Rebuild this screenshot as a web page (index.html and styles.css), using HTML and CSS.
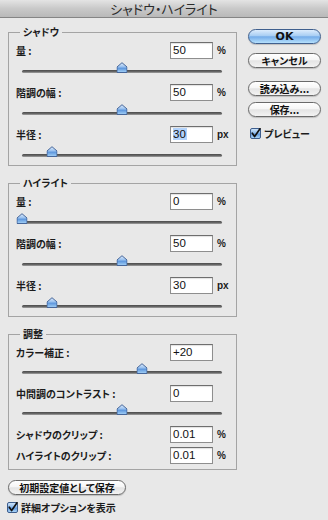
FILE: index.html
```html
<!DOCTYPE html>
<html lang="ja">
<head>
<meta charset="utf-8">
<title>シャドウ・ハイライト</title>
<link rel="stylesheet" href="styles.css">
</head>
<body>
<svg class="defs" width="0" height="0" aria-hidden="true">
  <defs>
    <linearGradient id="thumbg" x1="0" y1="0" x2="0" y2="1">
      <stop offset="0" stop-color="#e2eefc"/>
      <stop offset="0.45" stop-color="#93bdee"/>
      <stop offset="0.55" stop-color="#5c95dc"/>
      <stop offset="1" stop-color="#a6d3f8"/>
    </linearGradient>
    <linearGradient id="checkg" x1="0" y1="0" x2="0" y2="1">
      <stop offset="0" stop-color="#d4e8fb"/>
      <stop offset="0.45" stop-color="#8fbbec"/>
      <stop offset="0.55" stop-color="#5f98de"/>
      <stop offset="1" stop-color="#b2dcfb"/>
    </linearGradient>
  </defs>
</svg>
<div class="window">
  <div class="titlebar">シャドウ・ハイライト</div>
  <div class="content">
    <div class="left">
      <fieldset class="group">
        <legend>シャドウ</legend>
        <div class="row"><span class="label">量 :</span><span class="field">50</span><span class="unit">%</span></div>
        <div class="slider"><div class="track"><svg class="thumb" style="left:50%" width="11" height="11" viewBox="0 0 11 11"><path d="M0.5 10.5 V5 L5.5 0.7 L10.5 5 V10.5 Z" fill="url(#thumbg)" stroke="#46669a" stroke-linejoin="round"/></svg></div></div>
        <div class="row"><span class="label">階調の幅 :</span><span class="field">50</span><span class="unit">%</span></div>
        <div class="slider"><div class="track"><svg class="thumb" style="left:50%" width="11" height="11" viewBox="0 0 11 11"><path d="M0.5 10.5 V5 L5.5 0.7 L10.5 5 V10.5 Z" fill="url(#thumbg)" stroke="#46669a" stroke-linejoin="round"/></svg></div></div>
        <div class="row"><span class="label">半径 :</span><span class="field"><span class="sel">30</span></span><span class="unit">px</span></div>
        <div class="slider last"><div class="track"><svg class="thumb" style="left:15%" width="11" height="11" viewBox="0 0 11 11"><path d="M0.5 10.5 V5 L5.5 0.7 L10.5 5 V10.5 Z" fill="url(#thumbg)" stroke="#46669a" stroke-linejoin="round"/></svg></div></div>
      </fieldset>

      <fieldset class="group">
        <legend>ハイライト</legend>
        <div class="row"><span class="label">量 :</span><span class="field">0</span><span class="unit">%</span></div>
        <div class="slider"><div class="track"><svg class="thumb" style="left:0%" width="11" height="11" viewBox="0 0 11 11"><path d="M0.5 10.5 V5 L5.5 0.7 L10.5 5 V10.5 Z" fill="url(#thumbg)" stroke="#46669a" stroke-linejoin="round"/></svg></div></div>
        <div class="row"><span class="label">階調の幅 :</span><span class="field">50</span><span class="unit">%</span></div>
        <div class="slider"><div class="track"><svg class="thumb" style="left:50%" width="11" height="11" viewBox="0 0 11 11"><path d="M0.5 10.5 V5 L5.5 0.7 L10.5 5 V10.5 Z" fill="url(#thumbg)" stroke="#46669a" stroke-linejoin="round"/></svg></div></div>
        <div class="row"><span class="label">半径 :</span><span class="field">30</span><span class="unit">px</span></div>
        <div class="slider last"><div class="track"><svg class="thumb" style="left:15%" width="11" height="11" viewBox="0 0 11 11"><path d="M0.5 10.5 V5 L5.5 0.7 L10.5 5 V10.5 Z" fill="url(#thumbg)" stroke="#46669a" stroke-linejoin="round"/></svg></div></div>
      </fieldset>

      <fieldset class="group adjust">
        <legend>調整</legend>
        <div class="row"><span class="label">カラー補正 :</span><span class="field">+20</span><span class="unit"></span></div>
        <div class="slider"><div class="track"><svg class="thumb" style="left:60%" width="11" height="11" viewBox="0 0 11 11"><path d="M0.5 10.5 V5 L5.5 0.7 L10.5 5 V10.5 Z" fill="url(#thumbg)" stroke="#46669a" stroke-linejoin="round"/></svg></div></div>
        <div class="row"><span class="label">中間調のコントラスト :</span><span class="field">0</span><span class="unit"></span></div>
        <div class="slider"><div class="track"><svg class="thumb" style="left:50%" width="11" height="11" viewBox="0 0 11 11"><path d="M0.5 10.5 V5 L5.5 0.7 L10.5 5 V10.5 Z" fill="url(#thumbg)" stroke="#46669a" stroke-linejoin="round"/></svg></div></div>
        <div class="row"><span class="label">シャドウのクリップ :</span><span class="field">0.01</span><span class="unit">%</span></div>
        <div class="row clip"><span class="label">ハイライトのクリップ :</span><span class="field">0.01</span><span class="unit">%</span></div>
      </fieldset>

      <div class="btn wide">初期設定値として保存</div>
      <label class="checkrow bottom">
        <svg class="check" width="11" height="11" viewBox="0 0 11 11"><rect x="0.5" y="0.5" width="10" height="10" rx="1.5" fill="url(#checkg)" stroke="#3d5d8c"/><path d="M2.3 5.2 L4.6 8.6 L10 0.8" fill="none" stroke="#111" stroke-width="1.7" stroke-linecap="round" stroke-linejoin="round"/></svg>
        <span>詳細オプションを表示</span>
      </label>
    </div>

    <div class="right">
      <div class="btn default ok">OK</div>
      <div class="btn cancel">キャンセル</div>
      <div class="btn load">読み込み...</div>
      <div class="btn save">保存...</div>
      <label class="checkrow preview">
        <svg class="check" width="11" height="11" viewBox="0 0 11 11"><rect x="0.5" y="0.5" width="10" height="10" rx="1.5" fill="url(#checkg)" stroke="#3d5d8c"/><path d="M2.3 5.2 L4.6 8.6 L10 0.8" fill="none" stroke="#111" stroke-width="1.7" stroke-linecap="round" stroke-linejoin="round"/></svg>
        <span>プレビュー</span>
      </label>
    </div>
  </div>
</div>
</body>
</html>
```

FILE: styles.css
```css
* { box-sizing: border-box; }

html, body {
  margin: 0;
  padding: 0;
  background: #e8e8e8;
}

body {
  width: 328px;
  height: 520px;
  overflow: hidden;
  font-family: "Noto Sans CJK JP", "DejaVu Sans", sans-serif;
  font-feature-settings: "palt";
  color: #1c1c1c;
}

.defs {
  display: block;
  width: 0;
  height: 0;
  overflow: hidden;
}

.window {
  width: 328px;
  height: 520px;
  background: #e8e8e8;
}

.titlebar {
  height: 18px;
  line-height: 17px;
  text-align: center;
  font-size: 13px;
  color: #2b2b2b;
  background: linear-gradient(#e4e4e4, #c9c9c9 50%, #b9b9b9);
  border-bottom: 1px solid #858585;
}

.content {
  display: flex;
  align-items: flex-start;
  padding: 0 0 0 8px;
}

.left {
  width: 229px;
  display: flex;
  flex-direction: column;
  padding-top: 7px;
}

.right {
  width: 73px;
  margin-left: 11px;
  display: flex;
  flex-direction: column;
  padding-top: 11px;
}

/* group boxes */
.group {
  margin: 0 0 10px 0;
  padding: 3px 6px 0 7px;
  border: 1px solid #a4a4a4;
  min-width: 0;
}

.group legend {
  margin-left: 4px;
  padding: 0 3px;
  font-size: 10px;
  line-height: 14px;
  font-weight: bold;
  color: #1c1c1c;
}

.row {
  display: flex;
  align-items: center;
  height: 17px;
}

.label {
  flex: 1;
  font-size: 10px;
  font-weight: bold;
  line-height: 17px;
  white-space: nowrap;
}

.field {
  width: 43px;
  height: 17px;
  background: #fff;
  border: 1px solid #8e8e8e;
  border-top-color: #6e6e6e;
  box-shadow: inset 0 1px 1px rgba(0, 0, 0, 0.12);
  padding-left: 2px;
  font-family: "Liberation Sans", "DejaVu Sans", sans-serif;
  font-size: 11.5px;
  line-height: 15px;
  color: #111;
}

.sel {
  background: #b3d3fb;
  padding: 0 1px 0 0;
}

.unit {
  width: 13px;
  margin-left: 4px;
  font-family: "Liberation Sans", "DejaVu Sans", sans-serif;
  font-size: 10px;
  font-weight: bold;
  color: #1c1c1c;
  line-height: 17px;
}

/* sliders */
.slider {
  height: 25px;
  padding: 11px 8px 0 6px;
}

.slider.last {
  height: 22px;
}

.adjust .slider {
  height: 24px;
  padding-top: 10px;
}

.adjust {
  padding-bottom: 5px;
}

.row.clip {
  margin-top: 4px;
}

.track {
  position: relative;
  height: 3px;
  border-radius: 2px;
  background: linear-gradient(#4a4a4a, #6a6a6a 60%, #a8a8a8);
}

.thumb {
  position: absolute;
  top: -8px;
  display: block;
  transform: translateX(-50%);
}

/* buttons */
.btn {
  height: 15px;
  border: 1px solid #6a6a6a;
  border-radius: 8px;
  background: linear-gradient(#ffffff 0%, #f6f6f6 45%, #e4e4e4 52%, #f3f3f3 100%);
  box-shadow: 0 1px 1px rgba(0, 0, 0, 0.18);
  display: flex;
  align-items: center;
  justify-content: center;
  font-size: 10px;
  font-weight: bold;
  line-height: 13px;
  color: #111;
  white-space: nowrap;
}

.btn.default {
  border-color: #40608e;
  background: linear-gradient(#dcecfc 0%, #a7cdf3 45%, #74ace9 52%, #b6e1fd 100%);
  font-family: "DejaVu Sans", sans-serif;
  font-size: 11px;
}

.btn.cancel { margin-top: 9px; }
.btn.load { margin-top: 13px; }
.btn.save { margin-top: 6px; }

.btn.wide {
  width: 118px;
}

.checkrow {
  display: flex;
  align-items: center;
  height: 11px;
  font-size: 10px;
  font-weight: bold;
  line-height: 11px;
}

.check {
  display: block;
  flex: none;
  margin-right: 3px;
}

.checkrow.preview {
  margin-top: 11px;
  margin-left: 2px;
}

.checkrow.bottom {
  margin-top: 7px;
  margin-left: -1px;
}
```
